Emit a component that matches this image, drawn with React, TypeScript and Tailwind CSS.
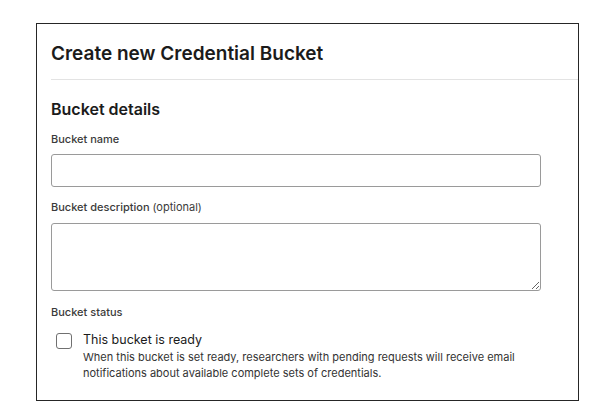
export default function App() {
  return (
    <div
      className="min-h-[410px] bg-white pl-[36px] pt-[23px] text-[#1b1b1b]"
      style={{ fontFamily: "Inter, 'Noto Sans', sans-serif" }}
    >
      <div className="h-[378px] w-[543px] border-[1.5px] border-[#262626]">
        <div className="ml-[14px] border-b border-[#e3e3e3] pb-[13px] pt-[17px]">
          <h1 className="text-[19px] font-semibold leading-[25px]">
            Create new Credential Bucket
          </h1>
        </div>
        <div className="px-[14px] pt-[17px]">
          <h2 className="text-[16px] font-semibold leading-[24px]">Bucket details</h2>

          <label className="mt-[10px] block text-[11px] font-medium leading-[16px] text-[#3b3b3b]">
            Bucket name
          </label>
          <input
            type="text"
            className="mt-[7px] block h-[33px] w-[490px] rounded-[3px] border border-[#9a9a9a] bg-white px-2 text-[13px] outline-none"
          />

          <label className="mt-[12px] block text-[11px] font-medium leading-[16px] text-[#3b3b3b]">
            Bucket description <span className="font-normal">(optional)</span>
          </label>
          <textarea className="mt-[8px] block h-[68px] w-[490px] rounded-[3px] border border-[#9a9a9a] bg-white px-2 py-1 text-[13px] outline-none" />

          <p className="mt-[13px] text-[11px] font-medium leading-[16px] text-[#3b3b3b]">
            Bucket status
          </p>

          <div className="mt-[11px] flex gap-[11px] pl-[5px]">
            <span className="mt-[2px] block size-[16px] shrink-0 rounded-[3px] border-[1.5px] border-[#707070] bg-white" />
            <div>
              <p className="text-[12.5px] leading-[18px] text-[#1b1b1b]">This bucket is ready</p>
              <p className="text-[11px] leading-[16px] text-[#333]">
                When this bucket is set ready, researchers with pending requests will receive email
                <br />
                notifications about available complete sets of credentials.
              </p>
            </div>
          </div>
        </div>
      </div>
    </div>
  );
}
